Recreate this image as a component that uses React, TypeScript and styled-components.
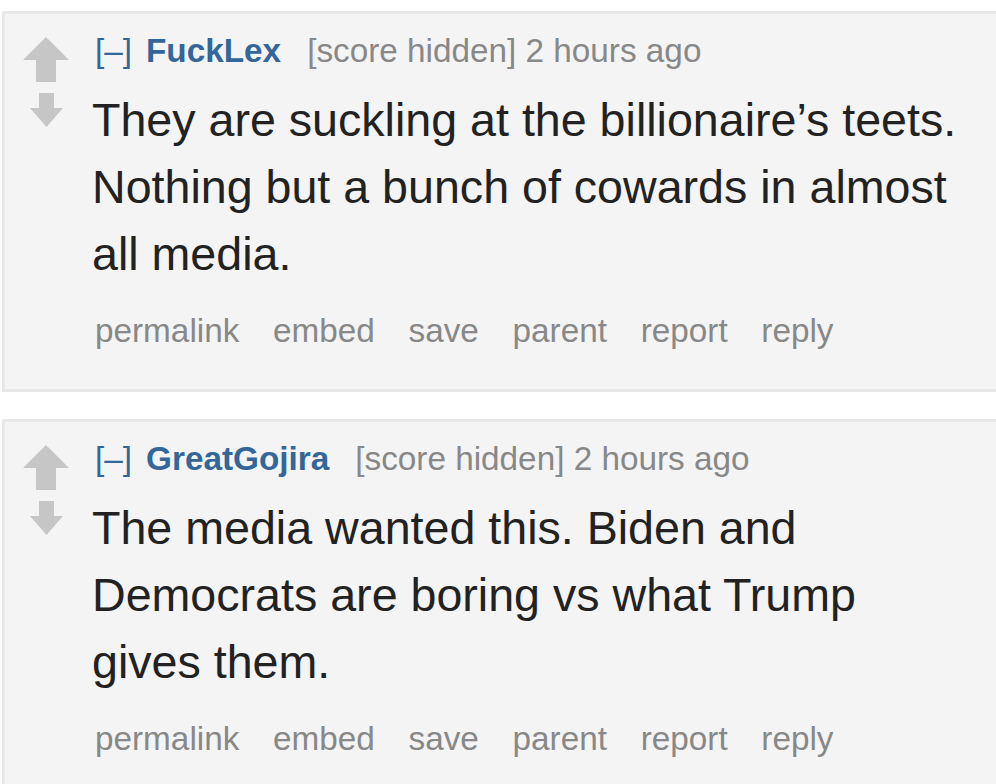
import styled, { createGlobalStyle } from "styled-components";

const GlobalStyle = createGlobalStyle`
  html, body {
    margin: 0;
    padding: 0;
    background: #ffffff;
    overflow: hidden;
    font-family: "Liberation Sans", Arial, sans-serif;
  }
`;

const Page = styled.div`
  padding: 11px 0 0 2px;
  display: flex;
  flex-direction: column;
  gap: 27px;
`;

const Card = styled.div`
  display: flex;
  background: #f4f4f4;
  border: 3px solid #e8e8e8;
  margin-right: -20px;
  padding: 17px 0 38px 18px;
`;

const VoteCol = styled.div`
  width: 46px;
  display: flex;
  flex-direction: column;
  align-items: center;
  gap: 11px;
  padding-top: 6px;
  margin-right: 23px;
  flex-shrink: 0;
`;

const Entry = styled.div`
  flex: 1;
  min-width: 0;
`;

const Tagline = styled.div`
  font-size: 33.3px;
  line-height: 40px;
  color: #888888;
  white-space: nowrap;
`;

const Expand = styled.a`
  color: #336699;
  margin-left: 3px;
  margin-right: 14px;
`;

const Author = styled.a`
  color: #336699;
  font-weight: bold;
  margin-right: 26px;
`;

const Body = styled.div`
  margin-top: 16px;
  font-size: 46.6px;
  line-height: 67px;
  color: #222222;
  padding-right: 40px;
`;

const Buttons = styled.ul`
  list-style: none;
  margin: 23px 0 0 3px;
  padding: 0;
  display: flex;
  gap: 33.7px;
  font-size: 33.3px;
  line-height: 40px;
  color: #888888;
`;

const Button = styled.li``;

function UpArrow() {
  return (
    <svg width="46" height="45" viewBox="0 0 46 45">
      <polygon points="23,0 46,23 33,23 33,45 13,45 13,23 0,23" fill="#c6c6c6" />
    </svg>
  );
}

function DownArrow() {
  return (
    <svg width="33" height="34" viewBox="0 0 33 34">
      <polygon points="9,0 24,0 24,15 33,15 16.5,34 0,15 9,15" fill="#c6c6c6" />
    </svg>
  );
}

interface CommentData {
  author: string;
  text: string;
}

const comments: CommentData[] = [
  {
    author: "FuckLex",
    text: "They are suckling at the billionaire\u2019s teets. Nothing but a bunch of cowards in almost all media.",
  },
  {
    author: "GreatGojira",
    text: "The media wanted this. Biden and Democrats are boring vs what Trump gives them.",
  },
];

const actions = ["permalink", "embed", "save", "parent", "report", "reply"];

function Comment({ author, text }: CommentData) {
  return (
    <Card>
      <VoteCol>
        <UpArrow />
        <DownArrow />
      </VoteCol>
      <Entry>
        <Tagline>
          <Expand>[&ndash;]</Expand>
          <Author>{author}</Author>
          [score hidden] 2 hours ago
        </Tagline>
        <Body>{text}</Body>
        <Buttons>
          {actions.map((a) => (
            <Button key={a}>{a}</Button>
          ))}
        </Buttons>
      </Entry>
    </Card>
  );
}

export default function App() {
  return (
    <>
      <GlobalStyle />
      <Page>
        {comments.map((c) => (
          <Comment key={c.author} {...c} />
        ))}
      </Page>
    </>
  );
}
